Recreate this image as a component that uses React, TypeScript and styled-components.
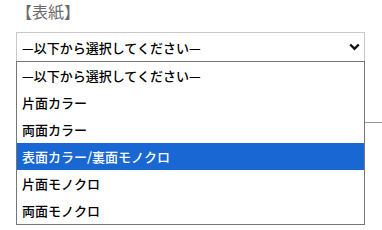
import { createGlobalStyle } from "styled-components";
import styled from "styled-components";

const GlobalStyle = createGlobalStyle`
  body {
    margin: 0;
    background: #fff;
    font-family: "Noto Sans CJK JP", "Noto Sans", sans-serif;
  }
`;

const options = [
   "—以下から選択してください—",
   "片面カラー",
   "両面カラー",
   "表面カラー/裏面モノクロ",
   "片面モノクロ",
   "両面モノクロ",
];

const selectedIndex = 3;

export default function App() {
   return (
      <Page>
         <GlobalStyle />
         <Title>【表紙】</Title>
         <Field>
            <SelectBox>
               <span>{options[0]}</span>
               <svg width="11" height="8" viewBox="0 0 11 8">
                  <path d="M1.2 1.5 L5.5 5.8 L9.8 1.5" fill="none" stroke="#111" strokeWidth="2.4" />
               </svg>
            </SelectBox>
            <ListBox>
               {options.map((o, i) => (
                  <Option key={o} $active={i === selectedIndex}>
                     {o}
                  </Option>
               ))}
            </ListBox>
         </Field>
         <Divider />
      </Page>
   );
}

const Page = styled.div`
  padding: 0 0 0 16px;
  width: 366px;
  min-height: 230px;
`;

const Title = styled.div`
  font-family: "Liberation Serif", "Noto Sans CJK JP", serif;
  font-size: 16px;
  line-height: 22px;
  padding-top: 2px;
  color: #6b6b6b;
  margin: 0 0 8px 0;
`;

const Field = styled.div`
  position: relative;
  width: 349px;
`;

const SelectBox = styled.div`
  box-sizing: border-box;
  height: 30px;
  border: 1px solid #c8c8c8;
  display: flex;
  align-items: center;
  justify-content: space-between;
  padding: 0 4px 0 5px;
  font-size: 13px;
  font-weight: 500;
  color: #000;
  background: #fff;
`;

const ListBox = styled.div`
  position: absolute;
  top: 29px;
  left: 0;
  box-sizing: border-box;
  width: 349px;
  border: 1px solid #767676;
  background: #fff;
  z-index: 2;
`;

const Option = styled.div<{ $active: boolean }>`
  height: 27px;
  line-height: 27px;
  padding-left: 5px;
  font-size: 13px;
  font-weight: 500;
  color: ${(p) => (p.$active ? "#fff" : "#000")};
  background: ${(p) => (p.$active ? "#1967d2" : "transparent")};
`;

const Divider = styled.div`
  margin-top: 60px;
  height: 1px;
  background: #999;
`;
